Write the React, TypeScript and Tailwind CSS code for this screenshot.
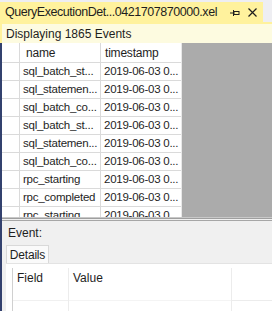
import React from "react";

const rows = [
  "sql_batch_st...",
  "sql_statemen...",
  "sql_batch_co...",
  "sql_batch_st...",
  "sql_statemen...",
  "sql_batch_co...",
  "rpc_starting",
  "rpc_completed",
  "rpc_starting",
];

export default function App() {
  return (
    <div className="w-[272px] h-[311px] overflow-hidden flex flex-col bg-[#eeeef2] font-['Liberation_Sans',Arial,sans-serif] text-[#1e1e1e]">
      <div className="h-[2px] shrink-0 bg-[#eeeef2]" />
      <div className="h-[20px] shrink-0 flex">
        <div className="w-[263px] bg-[#fff29d] flex items-center pl-[5px] pr-[6px]">
          <span className="text-[12.5px] leading-none tracking-[-0.45px] text-[#1e1e1e] whitespace-nowrap">
            QueryExecutionDet...0421707870000.xel
          </span>
          <div className="flex-1" />
          <svg width="10" height="8" viewBox="0 0 10 8" className="mr-[8px] mt-[1px]">
            <path d="M0 4H3" stroke="#1e1e1e" strokeWidth="1" />
            <path d="M3.5 1V7" stroke="#1e1e1e" strokeWidth="1" />
            <rect x="4" y="2.5" width="5" height="3" fill="none" stroke="#1e1e1e" strokeWidth="1" />
          </svg>
          <svg width="9" height="9" viewBox="0 0 9 9" className="mt-[1px]">
            <path d="M0.5 0.5L8.5 8.5M8.5 0.5L0.5 8.5" stroke="#1e1e1e" strokeWidth="1.2" />
          </svg>
        </div>
        <div className="flex-1 bg-[#eeeef2]" />
      </div>
      <div className="h-[2px] shrink-0 bg-[#fff29d]" />
      <div className="h-[19px] shrink-0 border-l-2 border-[#fff29d] bg-[#fdfbe0] flex items-center pl-[4px]">
        <span className="text-[12px] leading-none">Displaying 1865 Events</span>
      </div>
      <div className="flex-1 flex flex-col border-l-2 border-[#33416e]">
        <div className="h-[174px] shrink-0 flex overflow-hidden">
          <div className="w-[179px] shrink-0 bg-white flex flex-col">
            <div className="h-[20px] shrink-0 flex border-b border-[#dadada]">
              <div className="w-[18px] border-r border-[#dadada]" />
              <div className="w-[81px] border-r border-[#dadada] flex items-center pl-[6px] text-[12px] tracking-[-0.2px]">name</div>
              <div className="w-[80px] flex items-center pl-[4px] text-[12px] tracking-[-0.2px]">timestamp</div>
            </div>
            {rows.map((r, i) => (
              <div key={i} className="h-[18px] shrink-0 flex border-b border-[#dadada]">
                <div className="w-[18px] border-r border-[#dadada]" />
                <div className="w-[81px] border-r border-[#dadada] flex items-center pl-[3px] text-[11.5px] tracking-[-0.25px] whitespace-nowrap overflow-hidden">
                  {r}
                </div>
                <div className="w-[80px] flex items-center pl-[3px] text-[11.5px] tracking-[-0.25px] whitespace-nowrap overflow-hidden">
                  2019-06-03 0...
                </div>
              </div>
            ))}
          </div>
          <div className="w-[1px] bg-[#e8e8e8]" />
          <div className="flex-1 bg-[#ababab]" />
        </div>
        <div className="h-[1px] shrink-0 bg-[#c8c8c8]" />
        <div className="h-[1px] shrink-0 bg-[#9f9f9f]" />
        <div className="h-[1px] shrink-0 bg-[#f0f0f0]" />
        <div className="h-[1px] shrink-0 bg-[#a6a6a6]" />
        <div className="flex-1 bg-[#f0f0f0] flex flex-col">
          <div className="h-[24px] shrink-0 flex items-center pl-[6px] text-[12px]">Event:</div>
          <div className="h-[18px] shrink-0 flex pl-[4px]">
            <div className="w-[43px] bg-[#fafafa] border border-b-0 border-[#d9d9d9] flex items-center justify-center text-[12px] tracking-[-0.2px]">
              Details
            </div>
          </div>
          <div className="flex-1 ml-[4px] bg-white border-t border-[#e3e3e3] pt-[4px] pl-[6px] flex flex-col">
            <div className="flex-1 flex border-l border-[#d0d0d0]">
              <div className="w-[56px] border-r border-[#ececec] flex flex-col">
                <div className="h-[18px] flex items-center pl-[4px] text-[12px] mt-[1px]">Field</div>
                <div className="h-[13px]" />
                <div className="border-t border-[#f0f0f0]" />
              </div>
              <div className="w-[163px] border-r border-[#ececec] flex flex-col">
                <div className="h-[18px] flex items-center pl-[4px] text-[12px] mt-[1px]">Value</div>
                <div className="h-[13px]" />
                <div className="border-t border-[#f4f4f4]" />
              </div>
              <div className="flex-1 flex flex-col">
                <div className="h-[32px]" />
                <div className="border-t border-[#ececec]" />
              </div>
            </div>
          </div>
        </div>
      </div>
    </div>
  );
}
